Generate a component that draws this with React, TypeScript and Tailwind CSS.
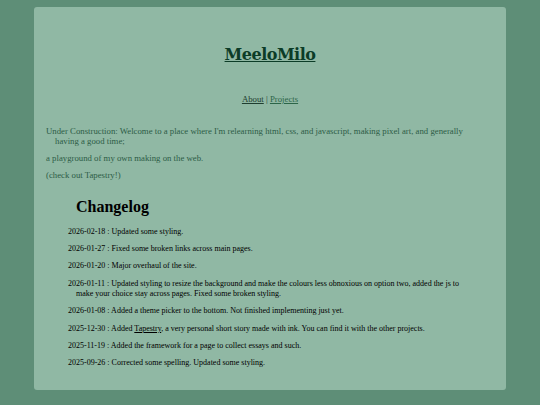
const entries: { date: string; text: React.ReactNode }[] = [
  { date: '2026-02-18', text: 'Updated some styling.' },
  { date: '2026-01-27', text: 'Fixed some broken links across main pages.' },
  { date: '2026-01-20', text: 'Major overhaul of the site.' },
  {
    date: '2026-01-11',
    text: 'Updated styling to resize the background and make the colours less obnoxious on option two, added the js to make your choice stay across pages. Fixed some broken styling.',
  },
  { date: '2026-01-08', text: 'Added a theme picker to the bottom. Not finished implementing just yet.' },
  {
    date: '2025-12-30',
    text: (
      <>
        Added <a className="underline">Tapestry</a>, a very personal short story made with ink. You can find it with the
        other projects.
      </>
    ),
  },
  { date: '2025-11-19', text: 'Added the framework for a page to collect essays and such.' },
  { date: '2025-09-26', text: 'Corrected some spelling. Updated some styling.' },
]

export default function App() {
  return (
    <div className="min-h-screen bg-[#5e8e77] pt-[7px] pb-[15px]">
      <main className="mx-auto h-[383px] w-[472px] rounded-[3px] bg-[#90b8a4] px-[12px] font-['Liberation_Serif',serif]">
        <h1 className="pt-[38px] text-center font-['DejaVu_Serif',serif] text-[16px] font-bold leading-[1.2] tracking-[-0.5px] text-[#0c3c27] underline">
          MeeloMilo
        </h1>

        {/* nav */}
        <nav className="mt-[30px] text-center text-[8.75px] leading-[1.15] text-[#1f3d30]">
          <a className="underline">About</a> | <a className="text-[#2c6548] underline">Projects</a>
        </nav>

        <div className="mt-[23px] pr-[22px] text-[8.75px] leading-[9.5px] text-[#2d5c46]">
          <p className="pl-[9px] -indent-[9px]">
            Under Construction: Welcome to a place where I'm relearning html, css, and javascript, making pixel art, and
            generally having a good time;
          </p>
          <p className="mt-[7.5px]">a playground of my own making on the web.</p>
          <p className="mt-[7.5px]">(check out Tapestry!)</p>
        </div>

        <section className="mx-[22px] mt-[18px] text-black">
          <h2 className="ml-[8px] text-[16px] font-bold leading-[1.15]">Changelog</h2>
          <div className="mt-[10px] text-[8px] leading-[10px]">
            {entries.map((e) => (
              <p key={e.date} className="mb-[7.4px] pl-[8px] -indent-[8px]">
                {e.date} : {e.text}
              </p>
            ))}
          </div>
        </section>
      </main>
    </div>
  )
}
